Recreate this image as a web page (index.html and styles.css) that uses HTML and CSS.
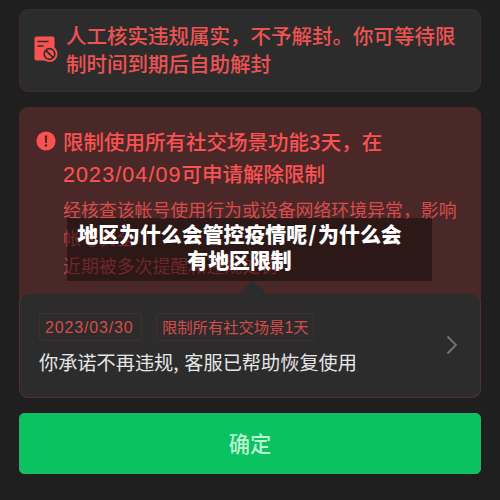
FILE: index.html
```html
<!DOCTYPE html>
<html lang="zh-CN">
<head>
<meta charset="utf-8">
<title>限制解除</title>
<link rel="stylesheet" href="styles.css">
</head>
<body>
<main class="page">
  <section class="notice">
    <svg class="notice-icon" viewBox="0 0 24 27" aria-hidden="true">
      <rect x="0.5" y="0.5" width="20" height="24" rx="2" fill="#fa5252"/>
      <path d="M3.5 5.5h11M3.5 10h6" stroke="#2c2c2c" stroke-width="1.7" fill="none"/>
      <circle cx="15.5" cy="18" r="8" fill="#fa5252"/>
      <circle cx="15.5" cy="18" r="5.3" fill="none" stroke="#2c2c2c" stroke-width="1.7"/>
      <path d="M11.8 14.3l7.4 7.4" stroke="#2c2c2c" stroke-width="1.7"/>
    </svg>
    <p class="notice-text">人工核实违规属实，不予解封。你可等待限<br>制时间到期后自助解封</p>
  </section>

  <section class="limit">
    <div class="limit-body">
      <svg class="alert-icon" viewBox="0 0 20 20" aria-hidden="true">
        <circle cx="10" cy="10" r="9.6" fill="#fa5252"/>
        <path d="M8.8 4.5h2.4l-.3 7.4H9.1z" fill="#4b2828"/>
        <circle cx="10" cy="14.5" r="1.3" fill="#4b2828"/>
      </svg>
      <div>
        <h1 class="limit-title">限制使用所有社交场景功能3天，在<br><span class="date">2023/04/09</span>可申请解除限制</h1>
        <p class="limit-desc">经核查该帐号使用行为或设备网络环境异常，影响<br><span class="dim">帐号安全<br>近期被多次提醒和违规处罚</span></p>
      </div>
    </div>
    <div class="record">
      <span class="notch"></span>
      <div class="record-main">
        <div class="tags"><span class="tag tag-date">2023/03/30</span><span class="tag">限制所有社交场景<span class="num">1</span>天</span></div>
        <p class="record-text">你承诺不再违规<span class="comma">,</span>客服已帮助恢复使用</p>
      </div>
      <svg class="chevron" viewBox="0 0 12 20" aria-hidden="true"><path d="M1.5 1.5L10 10l-8.500 8.500" fill="none" stroke="#737373" stroke-width="1.8"/></svg>
    </div>
    <div class="caption">地区为什么会管控疫情呢<span class="slash">/</span>为什么会<br>有地区限制</div>
  </section>

  <button class="confirm">确定</button>
</main>
</body>
</html>
```
FILE: styles.css
```css
* {
  box-sizing: border-box;
  margin: 0;
}

body {
  background: #1f1f1f;
  font-family: "Liberation Sans", "Noto Sans CJK SC", sans-serif;
  overflow: hidden;
}

.page {
  width: 500px;
  height: 500px;
  padding: 9px 19px 0;
}

.notice {
  display: flex;
  height: 83px;
  padding: 11px 0 0 14px;
  border: 1px solid #402a2b;
  border-radius: 9px;
  background: #2c2c2c;
}

.notice-icon {
  flex: none;
  width: 24px;
  height: 27px;
  margin: 15px 8px 0 0;
}

.notice-text {
  color: #ee5352;
  font-family: "Noto Sans CJK SC", sans-serif;
  font-size: 20.5px;
  font-weight: 500;
  line-height: 28px;
  white-space: nowrap;
}

.limit {
  position: relative;
  height: 291px;
  margin-top: 15px;
  border-radius: 9px;
  background: #4b2828;
}

.limit-body {
  display: flex;
  height: 187px;
  padding: 18px 0 0 17px;
}

.alert-icon {
  flex: none;
  width: 20px;
  height: 20px;
  margin: 6px 7px 0 0;
}

.limit-title {
  height: 64px;
  color: #fa5252;
  font-family: "Noto Sans CJK SC", sans-serif;
  font-size: 20.5px;
  font-weight: 500;
  line-height: 32px;
  white-space: nowrap;
}

.limit-title .date {
  font-family: "Liberation Sans", sans-serif;
  font-size: 21.500px;
  letter-spacing: 1.1px;
  line-height: 1;
  -webkit-text-stroke: 0.1px #fa5252;
}

.limit-desc {
  margin-top: 6px;
  color: #d84b4b;
  font-family: "Noto Sans CJK SC", sans-serif;
  font-size: 17.900px;
  line-height: 28px;
  white-space: nowrap;
}

.dim {
  color: #b84242;
}

.record {
  position: relative;
  display: flex;
  justify-content: space-between;
  height: 104px;
  padding: 19px 22px 0 19px;
  border: 1px solid #54302f;
  border-top: 0;
  border-radius: 9px;
  background: #2c2c2c;
}

.notch {
  position: absolute;
  top: -13px;
  left: 218px;
  width: 30px;
  height: 14px;
  background: #2c2c2c;
  clip-path: polygon(43% 8%, 50% 0, 57% 8%, 100% 100%, 0 100%);
}

.tags {
  display: flex;
  gap: 14px;
}

.tag {
  height: 28px;
  padding: 0 6px;
  border: 1px solid #482b2c;
  border-radius: 3px;
  color: #d94b4b;
  font-family: "Noto Sans CJK SC", sans-serif;
  font-size: 15.300px;
  line-height: 25px;
  white-space: nowrap;
}

.tag + .tag {
  width: 158px;
  padding-left: 5px;
}

.tag-date {
  width: 103px;
  padding-left: 5px;
  font-family: "Liberation Sans", sans-serif;
  font-size: 16px;
  letter-spacing: 0.85px;
  line-height: 27px;
}

.num {
  font-family: "Liberation Sans", sans-serif;
  font-size: 16px;
}

.record-text {
  margin-top: 7px;
  color: #e6e6e6;
  font-family: "Noto Sans CJK SC", sans-serif;
  font-size: 19.2px;
  line-height: 29px;
  white-space: nowrap;
}

.comma {
  display: inline-block;
  width: 11px;
}

.chevron {
  width: 12px;
  height: 20px;
  margin-top: 22px;
}

.caption {
  position: absolute;
  top: 111px;
  left: 48px;
  width: 365px;
  height: 63px;
  padding: 2px 20px 0 0;
  background: rgba(0, 0, 0, 0.4);
  color: #fff;
  font-family: "Noto Sans CJK SC", sans-serif;
  font-size: 20.900px;
  font-weight: 900;
  line-height: 26px;
  text-align: center;
  white-space: nowrap;
}

.slash {
  display: inline-block;
  width: 11px;
}

.confirm {
  display: block;
  width: 462px;
  height: 61px;
  margin-top: 15px;
  padding: 0 0 2px;
  border: 1px solid #25b566;
  border-radius: 5px;
  background: #0ac260;
  color: #b9f4d3;
  font-family: "Noto Sans CJK SC", sans-serif;
  font-size: 21.300px;
  font-weight: 500;
}
```
